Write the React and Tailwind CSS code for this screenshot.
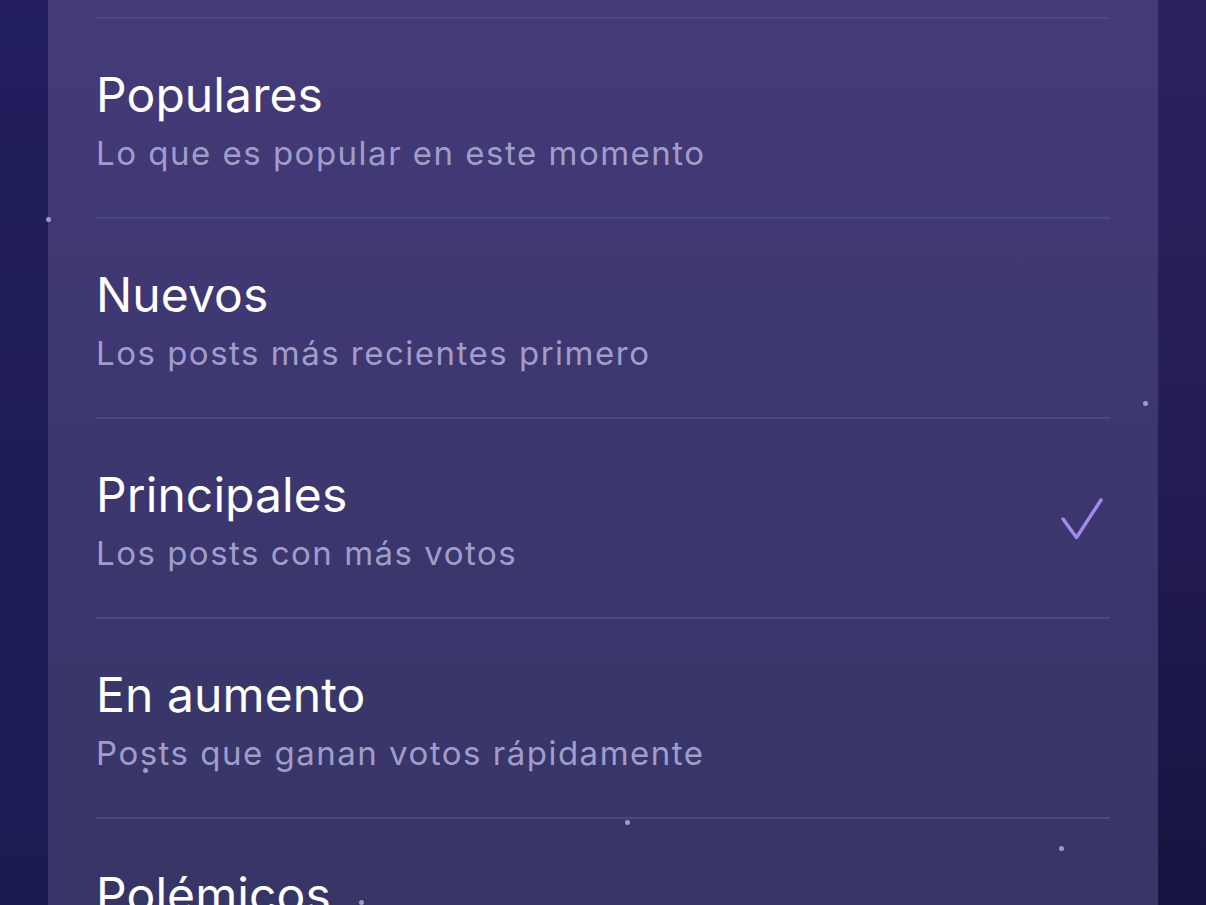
const OPTIONS = [
  { id: 'hot', title: 'Populares', sub: 'Lo que es popular en este momento' },
  { id: 'new', title: 'Nuevos', sub: 'Los posts más recientes primero' },
  { id: 'top', title: 'Principales', sub: 'Los posts con más votos', selected: true },
  { id: 'rising', title: 'En aumento', sub: 'Posts que ganan votos rápidamente' },
  { id: 'controversial', title: 'Polémicos', sub: 'Posts con opiniones divididas' },
];

const STARS = [
  [48, 219], [1145, 403], [145, 770], [627, 822], [1061, 848], [361, 902],
];

function Row({ title, sub, selected }) {
  return (
    <div className="flex flex-col shrink-0">
      <div className="h-[2px] bg-[#4c477c] mx-[48px]" />
      <div className="h-[198px] flex items-start justify-between px-[48px] pt-[48px]">
        <div className="flex flex-col">
          <div className="text-[48px] leading-[56px] text-white tracking-[0.1px] whitespace-nowrap">{title}</div>
          <div className="text-[33px] leading-[40px] text-[#a19dca] tracking-[1.5px] mt-[10px] whitespace-nowrap">{sub}</div>
        </div>
        {selected && (
          <svg width="46" height="46" viewBox="0 0 46 46" className="mt-[29px] mr-[4px]" fill="none">
            <path d="M3 23 L16.5 41.5 L41 4" stroke="#a587f0" strokeWidth="3.4" strokeLinecap="round" strokeLinejoin="round" />
          </svg>
        )}
      </div>
    </div>
  );
}

export default function App() {
  return (
    <div
      className="relative w-[1206px] h-[905px] overflow-hidden flex bg-[#1f1d58]"
      style={{ fontFamily: 'Inter, "Noto Sans", sans-serif' }}
    >
      <div className="w-[48px] shrink-0 bg-gradient-to-b from-[#221e5d] to-[#1b1b54]" />
      <div className="w-[1110px] shrink-0 flex flex-col bg-gradient-to-b from-[#443a79] via-[#3c376f] to-[#373566]">
        <div className="h-[17px] shrink-0" />
        {OPTIONS.map(o => (
          <Row key={o.id} {...o} />
        ))}
      </div>
      <div className="flex-1 bg-gradient-to-b from-[#2b2160] via-[#241c55] to-[#161440]" />

      {/* stars */}
      {STARS.map(([x, y], i) => (
        <div
          key={i}
          className="absolute w-[5px] h-[5px] rounded-full bg-[#b9b6d8] opacity-80"
          style={{ left: x - 2, top: y - 2 }}
        />
      ))}
    </div>
  );
}
